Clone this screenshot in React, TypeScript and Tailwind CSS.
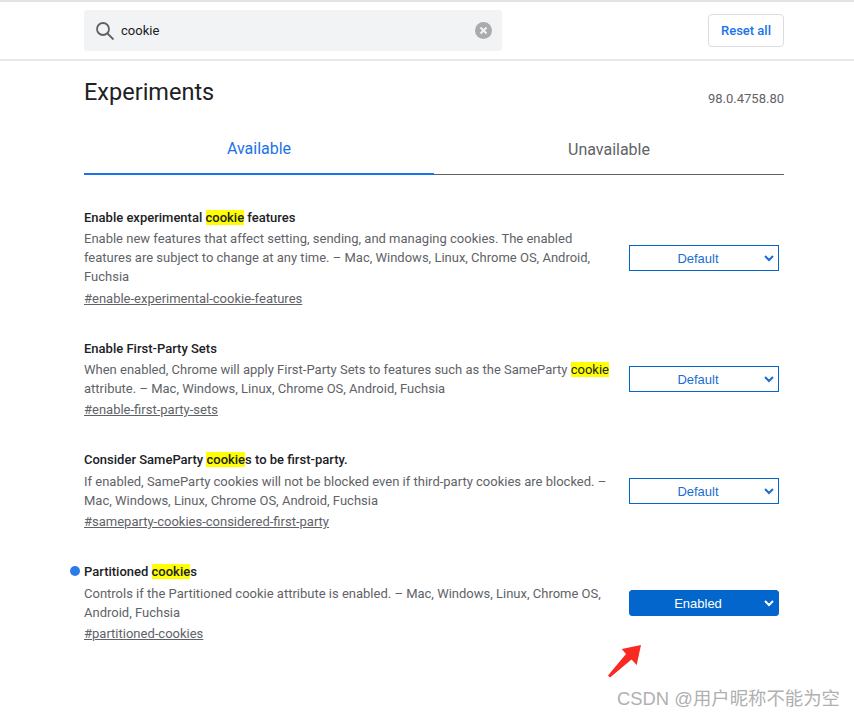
import React from "react";

function Mark({ children }: { children: React.ReactNode }) {
	return <mark className="bg-[#ffff00] text-[#202124]">{children}</mark>;
}

function FlagSelect({ value, enabled }: { value: string; enabled?: boolean }) {
	return (
		<div
			className={`relative flex h-[26px] w-[150px] items-center justify-center border pt-[2px] pr-[12px] font-['Liberation_Sans',sans-serif] text-[13px] border-[#0366cc] ${
				enabled ? "rounded-[3px] bg-[#0366cc] font-medium text-white" : "bg-white text-[#1a6ecf]"
			}`}
		>
			{value}
			<svg
				className="absolute right-[4px] top-[7px]"
				width="10"
				height="10"
				viewBox="0 0 10 10"
				fill="none"
				stroke="currentColor"
				strokeWidth="2"
			>
				<path d="M1 3l4 4 4-4" />
			</svg>
		</div>
	);
}

interface FlagProps {
	title: React.ReactNode;
	description: React.ReactNode;
	link: string;
	value: string;
	enabled?: boolean;
	selectOffset: string;
	descGap: string;
	linkGap: string;
	className: string;
}

function Flag({ title, description, link, value, enabled, selectOffset, descGap, linkGap, className }: FlagProps) {
	return (
		<div className={`relative flex justify-between ${className}`}>
			{enabled && (
				<span className="absolute left-[-14px] top-[3px] size-[10px] rounded-full bg-[#2a7de9]" />
			)}
			<div className="w-[527px]">
				<h2 className="text-[13px] font-medium leading-[18px] text-[#202124]">{title}</h2>
				<p className={`text-[13px] leading-[19px] text-[#5f6368] ${descGap}`}>{description}</p>
				<a className={`block text-[13px] leading-[19px] text-[#5f6368] underline ${linkGap}`}>{link}</a>
			</div>
			<div className={`mr-[5px] ${selectOffset}`}>
				<FlagSelect value={value} enabled={enabled} />
			</div>
		</div>
	);
}

export default function App() {
	return (
		<div className="relative h-[717px] w-[854px] overflow-hidden bg-white font-['Roboto',sans-serif]">
			<header className="flex h-[61px] items-center justify-between border-t-2 border-b-2 border-t-[#e3e3e3] border-b-[#e8e8e8] pl-[84px] pr-[70px]">
				<div className="flex h-[41px] w-[418px] items-center rounded-[3px] bg-[#f1f3f4] pl-[11px] pr-[10px]">
					<svg width="20" height="20" viewBox="0 0 20 20" fill="none" stroke="#5f6368" strokeWidth="1.8">
						<circle cx="8" cy="8" r="6" />
						<path d="M12.5 12.5l6 6" />
					</svg>
					<span className="ml-[6px] text-[13px] text-[#202124]">cookie</span>
					<svg className="ml-auto" width="17" height="17" viewBox="0 0 17 17">
						<circle cx="8.5" cy="8.5" r="8.5" fill="#a9abad" />
						<path d="M5.5 5.5l6 6M11.5 5.5l-6 6" stroke="#f1f3f4" strokeWidth="2" />
					</svg>
				</div>
				<button className="h-[33px] w-[76px] rounded-[4px] border border-[#dadce0] text-[13px] font-medium text-[#1a73e8]">
					Reset all
				</button>
			</header>

			<div className="pl-[84px] pr-[70px]">
				<div className="flex justify-between">
					<h1 className="mt-[17px] text-[23.5px] leading-[28px] text-[#202124]">Experiments</h1>
					<span className="mt-[29px] text-[13px] leading-[18px] text-[#5f6368]">98.0.4758.80</span>
				</div>
				<div className="mt-[14px] flex h-[53px] border-b border-[#5f6368]">
					<div className="-mb-px flex w-[350px] justify-center border-b-2 border-[#1a73e8] pt-[17px] text-[16px] leading-[20px] text-[#1a73e8]">
						Available
					</div>
					<div className="flex w-[350px] justify-center pt-[18px] text-[16px] leading-[20px] text-[#5f6368]">
						Unavailable
					</div>
				</div>

				<Flag
					className="mt-[34px]"
					selectOffset="mt-[36px]"
					descGap="mt-[2px]"
					linkGap="mt-[3px]"
					title={
						<>
							Enable experimental <Mark>cookie</Mark> features
						</>
					}
					description="Enable new features that affect setting, sending, and managing cookies. The enabled features are subject to change at any time. – Mac, Windows, Linux, Chrome OS, Android, Fuchsia"
					link="#enable-experimental-cookie-features"
					value="Default"
				/>
				<Flag
					className="mt-[32px]"
					selectOffset="mt-[26px]"
					descGap="mt-[2px]"
					linkGap="mt-[2px]"
					title="Enable First-Party Sets"
					description={
						<>
							When enabled, Chrome will apply First-Party Sets to features such as the SameParty <Mark>cookie</Mark>{" "}
							attribute. – Mac, Windows, Linux, Chrome OS, Android, Fuchsia
						</>
					}
					link="#enable-first-party-sets"
					value="Default"
				/>
				<Flag
					className="mt-[32px]"
					selectOffset="mt-[27px]"
					descGap="mt-[3px]"
					linkGap="mt-[2px]"
					title={
						<>
							Consider SameParty <Mark>cookie</Mark>s to be first-party.
						</>
					}
					description="If enabled, SameParty cookies will not be blocked even if third-party cookies are blocked. – Mac, Windows, Linux, Chrome OS, Android, Fuchsia"
					link="#sameparty-cookies-considered-first-party"
					value="Default"
				/>
				<Flag
					className="mt-[32px]"
					selectOffset="mt-[27px]"
					descGap="mt-[3px]"
					linkGap="mt-[2px]"
					title={
						<>
							Partitioned <Mark>cookie</Mark>s
						</>
					}
					description="Controls if the Partitioned cookie attribute is enabled. – Mac, Windows, Linux, Chrome OS, Android, Fuchsia"
					link="#partitioned-cookies"
					value="Enabled"
					enabled
				/>
			</div>

			<svg className="absolute left-[606px] top-[644px]" width="36" height="36" viewBox="0 0 36 36">
				<path d="M35 1L30.7 21 25.5 15.5 4 33.5 2 31.5 20 10 15.7 5Z" fill="#fb2a20" />
			</svg>
			<div className="absolute left-[617px] top-[687px] font-['Liberation_Sans','Noto_Sans_CJK_SC',sans-serif] text-[18.4px] leading-[24px] text-[#b0b0b0]">
				CSDN @用户昵称不能为空
			</div>
		</div>
	);
}
